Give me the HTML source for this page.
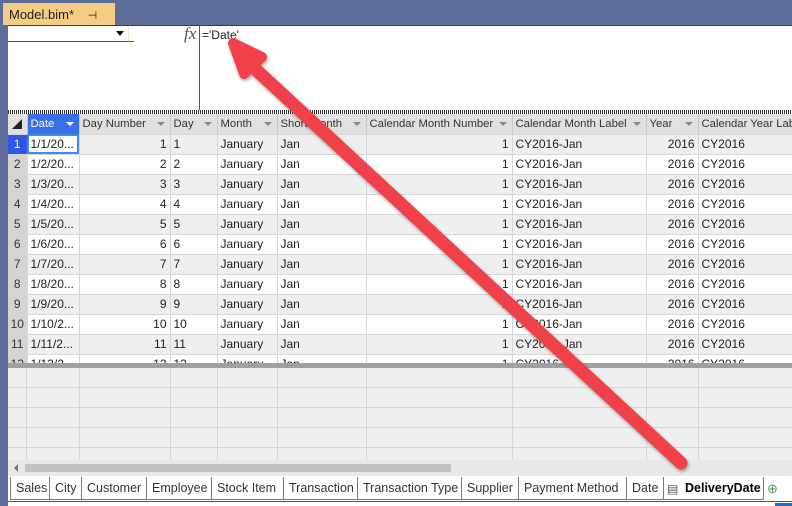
<!DOCTYPE html>
<html><head><meta charset="utf-8"><style>
*{margin:0;padding:0;box-sizing:border-box}
body{width:792px;height:506px;background:#5d6b99;position:relative;overflow:hidden;font-family:"Liberation Sans",sans-serif;font-size:12px;color:#1e1e1e}
.abs{position:absolute}
#tab{left:3px;top:3px;width:112px;height:22px;background:#f5cc84;font-size:13px;padding:4px 0 0 6px;color:#1e1e1e}
#content{left:8px;top:25px;width:784px;height:481px;background:#fff;border-top:1px solid #3c3c3c}
table{border-collapse:collapse;table-layout:fixed;position:absolute;left:8px;top:114px;width:784px}
td{height:20px;border-right:1px solid #d6d6d6;border-bottom:1px solid #d6d6d6;padding:0 3px;white-space:nowrap;overflow:hidden;font-size:12px}
tr.h td{background:#e0e0e0;color:#333;position:relative;border-right:1px solid #c8c8c8;font-size:11.3px}
tr.h td .dd{position:absolute;right:5px;top:8px;width:0;height:0;border-left:4px solid transparent;border-right:4px solid transparent;border-top:4px solid #888}
tr.g td{background:#efefef}
td.rh{background:#d4d4d4 !important;color:#333;text-align:center;padding:0}
td.r{text-align:right}
.tabs span{position:absolute;top:477px;height:23px;border:1px solid #7a7a7a;border-top:none;background:#fff;font-size:12.5px;padding:4px 0 0 5px;color:#333;white-space:nowrap;overflow:hidden}
</style></head><body>
<div class="abs" id="tab">Model.bim* <span style="margin-left:10px;font-size:11px">⊣</span> <span style="margin-left:4px">✕</span></div>
<div class="abs" id="content"></div>
<div class="abs" style="left:8px;top:41px;width:126px;border-top:1px solid #555"></div>
<div class="abs" style="left:128px;top:26px;width:1px;height:15px;background:#f0e8d0"></div>
<div class="abs" style="left:116px;top:31px;width:0;height:0;border-left:4px solid transparent;border-right:4px solid transparent;border-top:5px solid #111"></div>
<div class="abs" style="left:184px;top:24px;font-family:'Liberation Serif',serif;font-style:italic;font-size:17px;color:#555">fx</div>
<div class="abs" style="left:199px;top:26px;width:1px;height:84px;background:#555"></div>
<div class="abs" style="left:202px;top:28px;font-size:12px">='Date'</div>
<div class="abs" style="left:8px;top:110px;width:784px;height:4px;background:repeating-linear-gradient(90deg,#333 0 1px,#fff 1px 2px)"></div>
<table>
<colgroup><col style="width:19px"><col style="width:52px"><col style="width:91px"><col style="width:47px"><col style="width:60px"><col style="width:89px"><col style="width:146px"><col style="width:134px"><col style="width:52px"><col style="width:94px"></colgroup>
<tr class="h"><td class="rh" style="background:#e0e0e0!important"><span style="display:inline-block;width:0;height:0;border-left:10px solid transparent;border-bottom:10px solid #222;margin-top:4px"></span></td><td style="background:#3b6fe8;color:#fff">Date<i class="dd" style="border-top-color:#fff"></i></td><td>Day Number<i class="dd"></i></td><td>Day<i class="dd"></i></td><td>Month<i class="dd"></i></td><td>Short Month<i class="dd"></i></td><td>Calendar Month Number<i class="dd"></i></td><td>Calendar Month Label<i class="dd"></i></td><td>Year<i class="dd"></i></td><td>Calendar Year Label</td></tr>
<tr class="g"><td class="rh" style="background:#2f56e6!important;color:#fff">1</td><td style="background:#fff!important;outline:2px solid #3a8ee6;outline-offset:-2px">1/1/20...</td><td class="r">1</td><td>1</td><td>January</td><td>Jan</td><td class="r">1</td><td>CY2016-Jan</td><td class="r">2016</td><td>CY2016</td></tr>
<tr><td class="rh">2</td><td>1/2/20...</td><td class="r">2</td><td>2</td><td>January</td><td>Jan</td><td class="r">1</td><td>CY2016-Jan</td><td class="r">2016</td><td>CY2016</td></tr>
<tr class="g"><td class="rh">3</td><td>1/3/20...</td><td class="r">3</td><td>3</td><td>January</td><td>Jan</td><td class="r">1</td><td>CY2016-Jan</td><td class="r">2016</td><td>CY2016</td></tr>
<tr><td class="rh">4</td><td>1/4/20...</td><td class="r">4</td><td>4</td><td>January</td><td>Jan</td><td class="r">1</td><td>CY2016-Jan</td><td class="r">2016</td><td>CY2016</td></tr>
<tr class="g"><td class="rh">5</td><td>1/5/20...</td><td class="r">5</td><td>5</td><td>January</td><td>Jan</td><td class="r">1</td><td>CY2016-Jan</td><td class="r">2016</td><td>CY2016</td></tr>
<tr><td class="rh">6</td><td>1/6/20...</td><td class="r">6</td><td>6</td><td>January</td><td>Jan</td><td class="r">1</td><td>CY2016-Jan</td><td class="r">2016</td><td>CY2016</td></tr>
<tr class="g"><td class="rh">7</td><td>1/7/20...</td><td class="r">7</td><td>7</td><td>January</td><td>Jan</td><td class="r">1</td><td>CY2016-Jan</td><td class="r">2016</td><td>CY2016</td></tr>
<tr><td class="rh">8</td><td>1/8/20...</td><td class="r">8</td><td>8</td><td>January</td><td>Jan</td><td class="r">1</td><td>CY2016-Jan</td><td class="r">2016</td><td>CY2016</td></tr>
<tr class="g"><td class="rh">9</td><td>1/9/20...</td><td class="r">9</td><td>9</td><td>January</td><td>Jan</td><td class="r">1</td><td>CY2016-Jan</td><td class="r">2016</td><td>CY2016</td></tr>
<tr><td class="rh">10</td><td>1/10/2...</td><td class="r">10</td><td>10</td><td>January</td><td>Jan</td><td class="r">1</td><td>CY2016-Jan</td><td class="r">2016</td><td>CY2016</td></tr>
<tr class="g"><td class="rh">11</td><td>1/11/2...</td><td class="r">11</td><td>11</td><td>January</td><td>Jan</td><td class="r">1</td><td>CY2016-Jan</td><td class="r">2016</td><td>CY2016</td></tr>
<tr><td class="rh">12</td><td>1/12/2...</td><td class="r">12</td><td>12</td><td>January</td><td>Jan</td><td class="r">1</td><td>CY2016-Jan</td><td class="r">2016</td><td>CY2016</td></tr>
</table>
<div class="abs" style="left:8px;top:363px;width:784px;height:97px;background:#efefef;
background-image:linear-gradient(#d6d6d6 1px,transparent 1px);background-size:100% 20px;background-position:0 4px"></div>
<div class="abs" style="left:8px;top:363px;width:784px;height:97px;
background:linear-gradient(90deg,transparent 18px,#d6d6d6 18px 19px,transparent 19px 71px,#d6d6d6 71px 72px,transparent 72px 162px,#d6d6d6 162px 163px,transparent 163px 209px,#d6d6d6 209px 210px,transparent 210px 269px,#d6d6d6 269px 270px,transparent 270px 358px,#d6d6d6 358px 359px,transparent 359px 504px,#d6d6d6 504px 505px,transparent 505px 638px,#d6d6d6 638px 639px,transparent 639px 690px,#d6d6d6 690px 691px,transparent 691px)"></div>
<div class="abs" style="left:8px;top:363px;width:784px;height:5px;background:#a0a0a0"></div>
<div class="abs" style="left:8px;top:460px;width:784px;height:16px;background:#e8e8e8"></div>
<div class="abs" style="left:14px;top:464px;width:0;height:0;border-top:4px solid transparent;border-bottom:4px solid transparent;border-right:4px solid #777"></div>
<div class="abs" style="left:25px;top:464px;width:426px;height:8px;background:#c2c2c2"></div>
<div class="abs" style="left:8px;top:476px;width:784px;height:30px;background:#fff"></div>
<div class="tabs">
<span style="left:10px;width:40px">Sales</span>
<span style="left:49px;width:33px">City</span>
<span style="left:81px;width:66px">Customer</span>
<span style="left:146px;width:66px">Employee</span>
<span style="left:211px;width:73px">Stock Item</span>
<span style="left:283px;width:75px">Transaction</span>
<span style="left:357px;width:105px">Transaction Type</span>
<span style="left:461px;width:58px">Supplier</span>
<span style="left:518px;width:109px">Payment Method</span>
<span style="left:626px;width:38px">Date</span>
<span style="left:663px;width:101px;font-weight:bold;color:#000;padding-left:21px">DeliveryDate</span>
</div>
<div class="abs" style="left:667px;top:482px;font-size:12px;color:#555">▤</div>
<div class="abs" style="left:767px;top:481px;font-size:13px;color:#5a9a5a">⊕</div>
<div class="abs" style="left:8px;top:501px;width:784px;height:1px;background:#555"></div>
<div class="abs" style="left:775px;top:503px;width:17px;height:3px;background:#1c6fd0"></div>
<svg class="abs" style="left:0;top:0" width="792" height="506">
<defs><filter id="sh"><feDropShadow dx="1" dy="2" stdDeviation="1.5" flood-opacity="0.35"/></filter></defs>
<g filter="url(#sh)">
<line x1="252" y1="66" x2="681" y2="463" stroke="#f04048" stroke-width="13" stroke-linecap="round"/>
<polygon points="233,43 244,74 262,57" fill="#f04048" stroke="#f04048" stroke-width="10" stroke-linejoin="round"/>
</g>
</svg>
</body></html>
